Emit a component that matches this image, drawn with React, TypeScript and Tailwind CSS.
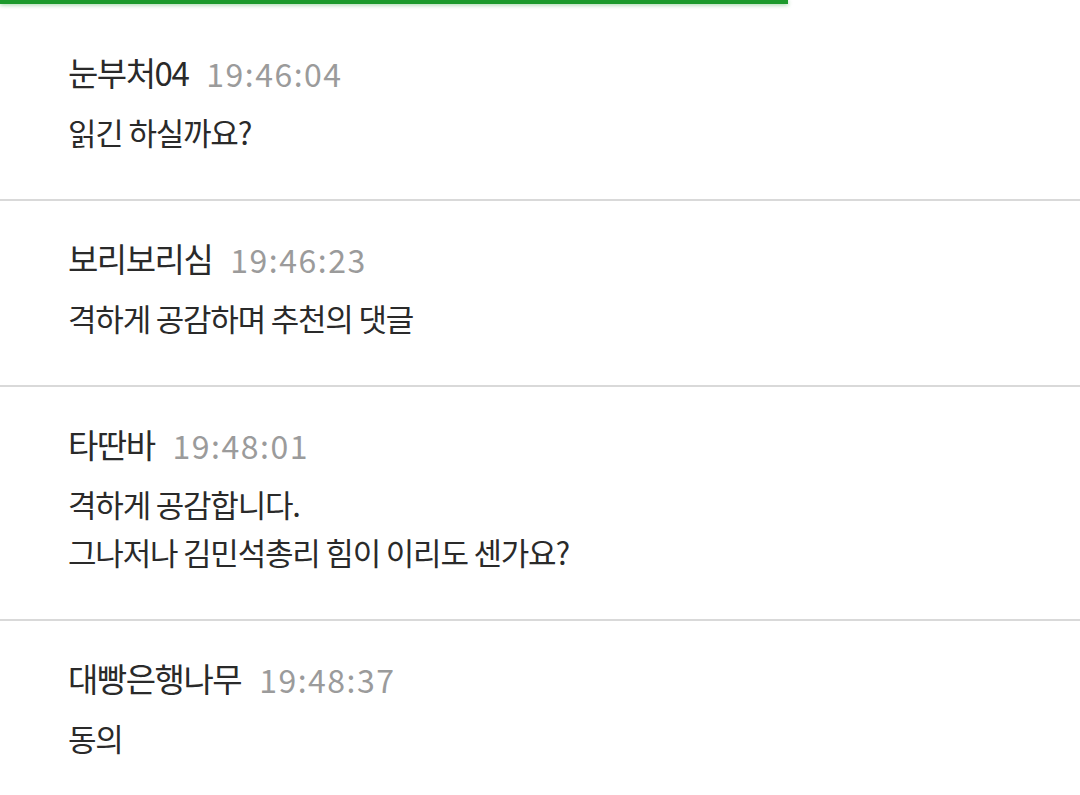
const comments = [
  { name: "눈부처04", time: "19:46:04", lines: ["읽긴 하실까요?"] },
  { name: "보리보리심", time: "19:46:23", lines: ["격하게 공감하며 추천의 댓글"] },
  { name: "타딴바", time: "19:48:01", lines: ["격하게 공감합니다.", "그나저나 김민석총리 힘이 이리도 센가요?"] },
  { name: "대빵은행나무", time: "19:48:37", lines: ["동의"] },
];

export default function App() {
  return (
    <div
      className="w-[1080px] h-[795px] bg-white overflow-hidden"
      style={{ fontFamily: '"Noto Sans CJK KR", "Noto Sans", sans-serif' }}
    >
      {/* progress bar */}
      <div className="h-[4px] w-[788px] bg-[#1c9a2c] shadow-[0_1px_4px_rgba(28,154,44,0.45)]" />

      {comments.map((c, i) => (
        <div key={c.name}>
          {i > 0 && <div className="h-[2px] bg-[#d9d9d9]" />}
          <div className={`pl-[68px] pb-[43px] ${i === 0 ? "pt-[45px]" : "pt-[34px]"}`}>
            <div className="flex items-center h-[48px]">
              <span className="text-[33px] tracking-[-1.5px] text-[#2a2a2a]">{c.name}</span>
              <span className="ml-[18px] text-[32px] tracking-[1.5px] text-[#9b9b9b]">{c.time}</span>
            </div>
            <div className="mt-[11px] text-[31px] tracking-[-1.2px] leading-[48px] text-[#2a2a2a]">
              {c.lines.map((l) => (
                <div key={l}>{l}</div>
              ))}
            </div>
          </div>
        </div>
      ))}
    </div>
  );
}
